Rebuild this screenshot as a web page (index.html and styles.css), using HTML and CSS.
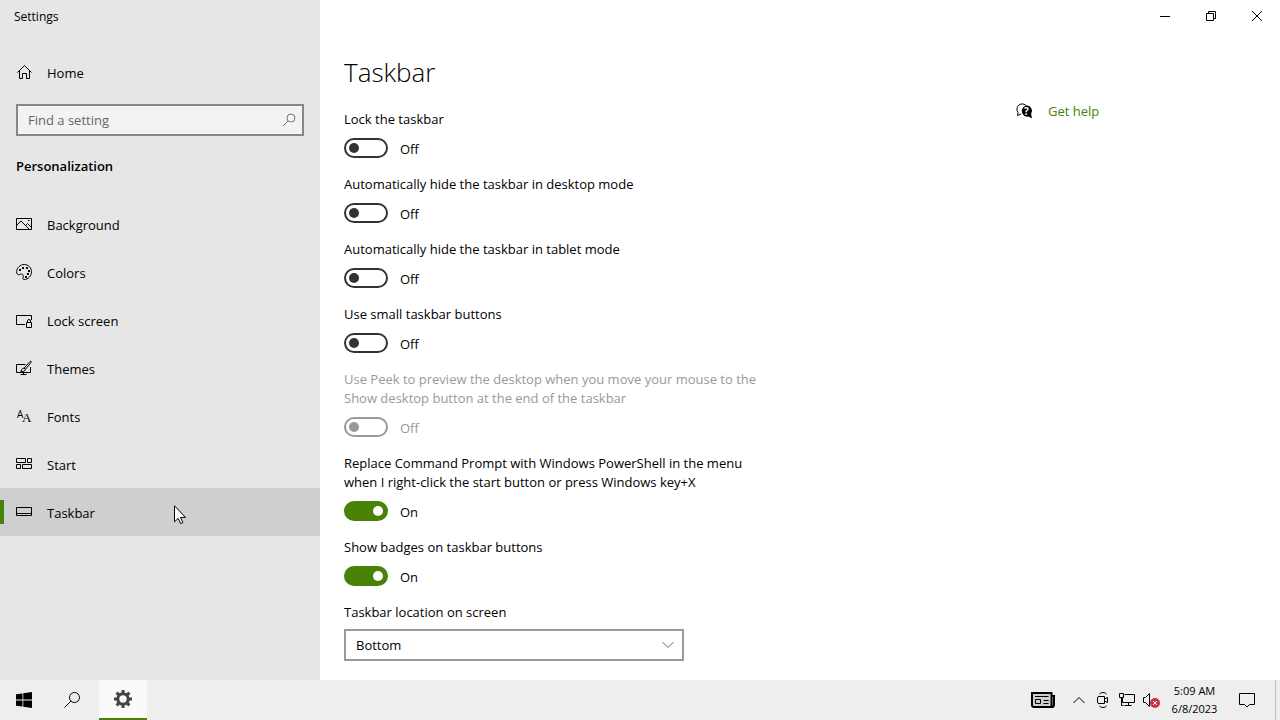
FILE: index.html
```
<!DOCTYPE html>
<html lang="en">
<head>
    <meta charset="UTF-8">
    <meta name="viewport" content="width=device-width, initial-scale=1.0">
    <title>Settings</title>
    <link rel="stylesheet" href="styles.css">
</head>

<body>

    <div class="window">
        <aside class="sidebar">
            <div class="app-title">Settings</div>
            <a class="nav-link" href="#">
                <svg class="icon" viewBox="0 0 16 16"><path d="M1.500 8.500 8.500 1.500l7 7M3.500 7v7.500h3v-5h4v5h3V7"/></svg>
                <span>Home</span>
            </a>
            <div class="search">
                <input type="text" placeholder="Find a setting" aria-label="Find a setting">
                <svg class="icon" viewBox="0 0 16 16"><circle cx="10" cy="6" r="4"/><path d="M7 9l-5 5"/></svg>
            </div>
            <h2>Personalization</h2>
            <nav>
                <a class="nav-link" href="#">
                    <svg class="icon" viewBox="0 0 16 16"><path d="M.5 2.500h15v11H.5zM1 9l4-4 8 8M9.500 9.500l2-2 4 4"/><path d="M12 4.500h1.500"/></svg>
                    <span>Background</span>
                </a>
                <a class="nav-link" href="#">
                    <svg class="icon" viewBox="0 0 16 16"><path d="M.6 7.500C1 3.500 4.200.5 8.200.5c4.100 0 7.300 3.300 7.300 7.300 0 4.200-3.200 7.700-7.300 7.700-1.200 0-1.500-.7-1.200-1.700.4-1.500.5-2.300-.4-3.300-.8-.9-1.600-.5-2.800 0C2 11.200.4 10 .6 7.500z"/><path class="dots" d="M3 5h2v2H3zM6 3h2v2H6zM10 3h2v2h-2zM12 6h2v2h-2zM11 9h2v2h-2zM9 12h2v2H9z"/></svg>
                    <span>Colors</span>
                </a>
                <a class="nav-link" href="#">
                    <svg class="icon" viewBox="0 0 16 16"><path d="M9 12.500H.5v-9h15V8M10.500 10.500h5v5h-5zM11.500 10.500V9a1.500 1.500 0 0 1 3 0v1.500"/></svg>
                    <span>Lock screen</span>
                </a>
                <a class="nav-link" href="#">
                    <svg class="icon" viewBox="0 0 16 16"><path d="M9.500 4.500h-9v8h14V7M7.500 12.500v2M4.500 14.500h6"/><path d="M8 8.200 14 1.500c1-.8 1.700 0 1 1L9.500 9.300zM8 8.200c-1.500-.2-2 .8-2.300 2-.2.700-.6.900-1.200 1 2 .8 4.800.3 5-1.900"/></svg>
                    <span>Themes</span>
                </a>
                <a class="nav-link" href="#">
                    <svg class="icon" viewBox="0 0 16 16"><text class="sans" x="1" y="10">A</text><text class="serif" x="6" y="14">A</text></svg>
                    <span>Fonts</span>
                </a>
                <a class="nav-link" href="#">
                    <svg class="icon" viewBox="0 0 16 16"><path d="M.5 2.500h9v4h-9zM11.500 2.500h4v4h-4zM.5 8.500h4v4h-4zM6.500 8.500h9v4h-9z"/></svg>
                    <span>Start</span>
                </a>
                <a class="nav-link active" href="#">
                    <svg class="icon" viewBox="0 0 16 16"><path d="M.5 3.500h15v8H.5zM.5 9.500h15"/></svg>
                    <span>Taskbar</span>
                    <svg class="cursor" viewBox="0 0 12 20"><path d="M.5.8v16l3.700-3.500 2.500 5.300 2.200-1-2.400-5.200h5z"/></svg>
                </a>
            </nav>
        </aside>

        <main>
            <div class="window-buttons">
                <button type="button" aria-label="Minimize"><svg viewBox="0 0 10 10"><path d="M0 5.500h10"/></svg></button>
                <button type="button" aria-label="Restore"><svg viewBox="0 0 10 10"><path d="M.5 2.500h7v7h-7zM2.500 2.500v-2h7v7h-2"/></svg></button>
                <button type="button" aria-label="Close"><svg viewBox="0 0 10 10"><path d="M0 0l10 10M10 0 0 10"/></svg></button>
            </div>
            <h1>Taskbar</h1>
            <div class="columns">
                <form class="settings">
                    <div class="setting">
                        <label for="lock">Lock the taskbar</label>
                        <div class="switch"><input type="checkbox" id="lock"><span>Off</span></div>
                    </div>
                    <div class="setting">
                        <label for="hide-desktop">Automatically hide the taskbar in desktop mode</label>
                        <div class="switch"><input type="checkbox" id="hide-desktop"><span>Off</span></div>
                    </div>
                    <div class="setting">
                        <label for="hide-tablet">Automatically hide the taskbar in tablet mode</label>
                        <div class="switch"><input type="checkbox" id="hide-tablet"><span>Off</span></div>
                    </div>
                    <div class="setting">
                        <label for="small">Use small taskbar buttons</label>
                        <div class="switch"><input type="checkbox" id="small"><span>Off</span></div>
                    </div>
                    <div class="setting disabled">
                        <label for="peek">Use Peek to preview the desktop when you move your mouse to the Show desktop button at the end of the taskbar</label>
                        <div class="switch"><input type="checkbox" id="peek" disabled><span>Off</span></div>
                    </div>
                    <div class="setting">
                        <label for="powershell">Replace Command Prompt with Windows PowerShell in the menu when I right-click the start button or press Windows key+X</label>
                        <div class="switch"><input type="checkbox" id="powershell" checked><span>On</span></div>
                    </div>
                    <div class="setting">
                        <label for="badges">Show badges on taskbar buttons</label>
                        <div class="switch"><input type="checkbox" id="badges" checked><span>On</span></div>
                    </div>
                    <div class="setting location">
                        <label for="location">Taskbar location on screen</label>
                        <div class="select">
                            <select id="location">
                                <option>Left</option>
                                <option>Top</option>
                                <option>Right</option>
                                <option selected>Bottom</option>
                            </select>
                            <svg viewBox="0 0 12 8"><path d="M.5 1 6 6.500 11.500 1"/></svg>
                        </div>
                    </div>
                </form>
                <aside class="help">
                    <svg class="icon" viewBox="0 0 16 16"><path d="M5 11 1.500 12.500l.5-3A5 5 0 1 1 10.500 3"/><path class="bubble" d="M10.500 2.500a5.500 5.500 0 0 1 4.600 8.600L16 15.500l-3.500-1.900a5.600 5.600 0 1 1-2-11.100z"/><text x="8" y="12">?</text></svg>
                    <a href="#">Get help</a>
                </aside>
            </div>
        </main>
    </div>

    <footer class="taskbar">
        <button type="button" aria-label="Start"><svg class="logo" viewBox="0 0 16 16"><path d="M0 2.300 6.500 1.400v6.100H0zM7.300 1.300 16 0v7.500H7.300zM0 8.400h6.500v6.200L0 13.700zM7.300 8.400H16V16l-8.700-1.300z"/></svg></button>
        <button type="button" aria-label="Search"><svg class="icon" viewBox="0 0 16 16"><circle cx="10.500" cy="5.500" r="5"/><path d="M7 9l-6.500 6.500"/></svg></button>
        <button type="button" class="running" aria-label="Settings"><svg class="gear" viewBox="0 0 18 18"><circle cx="9" cy="9" r="5.200"/><path d="M9 0v3.500M9 14.500V18M0 9h3.500M14.500 9H18M2.600 2.600l2.500 2.500M12.900 12.900l2.500 2.500M2.600 15.400l2.500-2.500M12.900 5.100l2.500-2.500"/></svg></button>
        <div class="tray">
            <button type="button" class="news" aria-label="News"><svg viewBox="0 0 24 16"><path class="paper" d="M20.500 15H3a2 2 0 0 1-2-2V1h19.500v14M20.500 4H23v9a2 2 0 0 1-2.500 2"/><path class="lines" d="M4 4.500h13.500M12.500 8.500h5M12.500 11.500h5M4.500 7.500h5v4h-5z"/></svg></button>
            <button type="button" aria-label="Show hidden icons"><svg class="chevron" viewBox="0 0 12 8"><path d="M.5 7 6 1.500 11.500 7"/></svg></button>
            <button type="button" aria-label="Meet Now"><svg class="icon" viewBox="0 0 16 16"><path d="M4 4.500h5.500v7H4a1.500 1.500 0 0 1-1.500-1.500V6A1.500 1.500 0 0 1 4 4.500zM9.500 7l3-1.500v5l-3-1.500M4.500 2c2-2 5-2 7 0M4.500 14c2 2 5 2 7 0"/></svg></button>
            <button type="button" aria-label="Network"><svg class="icon" viewBox="0 0 16 16"><path d="M5.500 2.500h10v8h-12v-5M.5 1.500h4v4h-4zM2.500 5.500v8M9.500 10.500v3M5.500 13.500h7M2.500 13.500h2"/></svg></button>
            <button type="button" aria-label="Volume"><svg class="icon" viewBox="0 0 16 16"><path d="M.5 5.500h2l4-4v13l-4-4h-2z"/><circle class="muted" cx="12" cy="11" r="5"/><path class="cross" d="M10 9l4 4M14 9l-4 4"/></svg></button>
            <div class="clock"><span>5:09 AM</span><span>6/8/2023</span></div>
            <button type="button" class="action" aria-label="Notifications"><svg class="icon" viewBox="0 0 16 16"><path d="M.5 1.500h15v11h-5L8 15l-2.500-2.500h-5z"/></svg></button>
            <button type="button" class="peek" aria-label="Show desktop"></button>
        </div>
    </footer>

</body>

</html>
```
FILE: styles.css
```
* {
    box-sizing: border-box;
}

body {
    display: flex;
    flex-direction: column;
    height: 100vh;
    margin: 0;
    overflow: hidden;
    color: #000;
    font: 13px/20px "Open Sans", "Noto Sans", sans-serif;
}

h1, h2 {
    margin: 0;
}

button {
    display: flex;
    align-items: center;
    justify-content: center;
    padding: 0;
    border: none;
    background: none;
}

svg {
    flex: none;
    overflow: visible;
    fill: none;
    stroke: #000;
}

.icon {
    width: 16px;
    height: 16px;
}

.window {
    display: flex;
    flex: 1;
    min-height: 0;
}

/* sidebar */
.sidebar {
    width: 320px;
    background: #e6e6e6;
}

.app-title {
    height: 48px;
    padding: 7px 14px;
    font-size: 12px;
}

.nav-link {
    position: relative;
    display: flex;
    align-items: center;
    gap: 15px;
    height: 48px;
    padding: 0 16px;
    color: #000;
    text-decoration: none;
}

.nav-link span {
    padding-top: 2px;
}

.nav-link.active {
    background: #cfcfcf;
}

.nav-link.active::before {
    content: "";
    position: absolute;
    left: 0;
    top: 12px;
    width: 4px;
    height: 24px;
    background: #498205;
}

.nav-link .dots {
    fill: #000;
    stroke: none;
}

.nav-link text {
    fill: #000;
    stroke: none;
}

.nav-link .sans {
    font-size: 10px;
}

.nav-link .serif {
    font: 13px "Liberation Serif", serif;
}

.cursor {
    position: absolute;
    left: 174px;
    top: 17px;
    width: 12px;
    height: 20px;
    fill: #fff;
}

.search {
    display: flex;
    align-items: center;
    height: 32px;
    margin: 8px 16px 20px;
    padding-right: 5px;
    border: 2px solid #868686;
    background: #f3f3f3;
}

.search input {
    flex: 1;
    min-width: 0;
    padding: 0 10px;
    border: none;
    outline: none;
    background: none;
    font: inherit;
}

.search input::placeholder {
    color: #666;
}

.search svg {
    stroke: #777;
}

h2 {
    margin: 0 16px 24px;
    font-size: 13px;
    font-weight: 600;
    line-height: 20px;
}

/* content */
main {
    flex: 1;
    min-width: 0;
    background: #fff;
}

.window-buttons {
    display: flex;
    justify-content: flex-end;
    height: 32px;
}

.window-buttons button {
    width: 46px;
}

.window-buttons svg {
    width: 10px;
    height: 10px;
}

h1 {
    padding: 20px 24px 18px;
    font-size: 26px;
    font-weight: 300;
    line-height: 40px;
}

.columns {
    display: flex;
    justify-content: space-between;
    padding: 0 24px;
}

.settings {
    width: 430px;
}

.setting {
    margin-bottom: 17px;
}

.setting label {
    display: block;
    margin-bottom: 9px;
    line-height: 19px;
}

.location label {
    margin-bottom: 7px;
}

.switch {
    display: flex;
    align-items: center;
    gap: 12px;
    height: 20px;
}

.switch span {
    padding-top: 2px;
}

.switch input {
    display: flex;
    align-items: center;
    width: 44px;
    height: 20px;
    margin: 0;
    padding: 0 3px;
    appearance: none;
    border: 2px solid #333;
    border-radius: 10px;
}

.switch input::before {
    content: "";
    width: 10px;
    height: 10px;
    border-radius: 50%;
    background: #333;
}

.switch input:checked {
    justify-content: flex-end;
    border-color: #498205;
    background: #498205;
}

.switch input:checked::before {
    background: #fff;
}

.disabled {
    color: #999;
}

.disabled input {
    border-color: #999;
}

.disabled input::before {
    background: #999;
}

.select {
    display: grid;
    align-items: center;
    max-width: 340px;
}

.select select,
.select svg {
    grid-area: 1 / 1;
}

.select select {
    height: 32px;
    padding: 0 10px;
    appearance: none;
    border: 2px solid #999;
    border-radius: 0;
    background: #fff;
    color: #000;
    font: inherit;
}

.select svg {
    justify-self: end;
    width: 12px;
    height: 8px;
    margin-right: 10px;
    stroke: #666;
    pointer-events: none;
}

.help {
    display: flex;
    gap: 16px;
    width: 240px;
    margin-top: -9px;
}

.help .icon {
    margin-top: 2px;
}

.help .bubble {
    fill: #000;
    stroke: none;
}

.help text {
    fill: #fff;
    stroke: none;
    font-size: 10px;
    font-weight: 700;
}

.help a {
    color: #498205;
    text-decoration: none;
}

/* taskbar */
.taskbar {
    display: flex;
    height: 40px;
    background: #eee;
}

.taskbar button {
    width: 48px;
}

.taskbar .running {
    margin-left: 3px;
    border-bottom: 2px solid #498205;
    background: #fafafa;
}

.logo {
    width: 16px;
    height: 16px;
    fill: #000;
    stroke: none;
}

.gear {
    width: 18px;
    height: 18px;
    stroke: #444;
    stroke-width: 3;
}

.tray {
    display: flex;
    margin-left: auto;
}

.tray button {
    width: 24px;
}

.tray .news {
    width: 48px;
}

.news svg {
    width: 24px;
    height: 16px;
}

.news .paper {
    fill: #ccc;
    stroke-width: 2;
}

.chevron {
    width: 12px;
    height: 8px;
}

.tray .muted {
    fill: #c9304a;
    stroke: none;
}

.tray .cross {
    stroke: #fff;
}

.clock {
    display: flex;
    flex-direction: column;
    justify-content: center;
    width: 63px;
    font-size: 11px;
    line-height: 18px;
    text-align: center;
}

.tray .action {
    width: 42px;
}

.tray .peek {
    width: 5px;
    margin-left: 7px;
    border-left: 1px solid #bbb;
}
```
